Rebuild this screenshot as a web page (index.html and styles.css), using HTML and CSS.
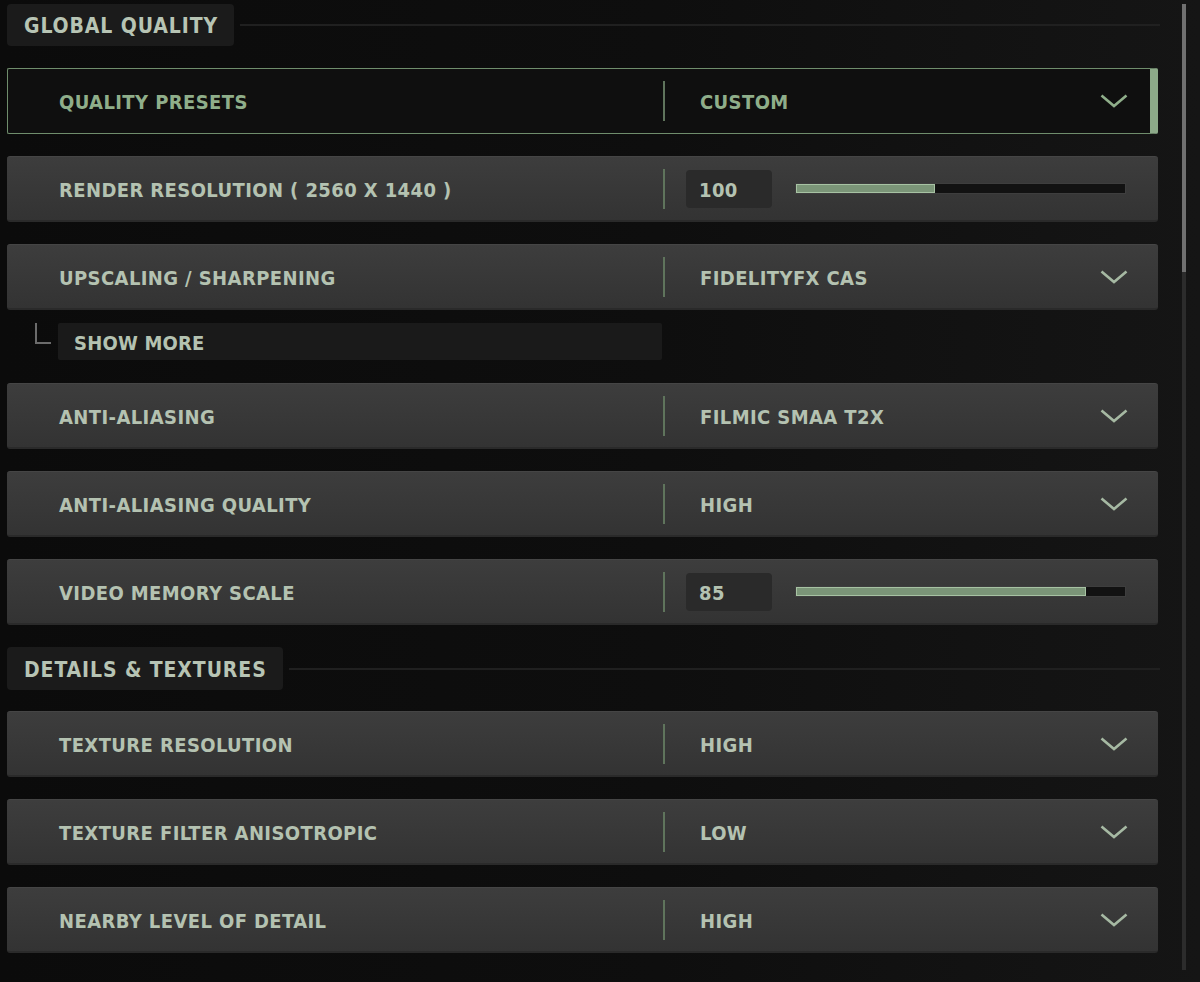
FILE: index.html
```html
<!DOCTYPE html>
<html>
<head>
<meta charset="utf-8">
<link rel="stylesheet" href="styles.css">
</head>
<body>
<div class="layout">
  <main class="content">
    <div class="section-head">
      <div class="head-box">GLOBAL QUALITY</div>
      <div class="head-line"></div>
    </div>

    <div class="row row-active">
      <div class="label">QUALITY PRESETS</div>
      <div class="sep"></div>
      <div class="value">CUSTOM</div>
      <svg class="chev" viewBox="0 0 28 14"><polyline points="1.5,1.5 14,12 26.5,1.5"/></svg>
    </div>

    <div class="row">
      <div class="label">RENDER RESOLUTION ( 2560 X 1440 )</div>
      <div class="sep"></div>
      <div class="num">100</div>
      <div class="track"><div class="fill" style="width:42.3%"></div></div>
    </div>

    <div class="row">
      <div class="label">UPSCALING / SHARPENING</div>
      <div class="sep"></div>
      <div class="value">FIDELITYFX CAS</div>
      <svg class="chev" viewBox="0 0 28 14"><polyline points="1.5,1.5 14,12 26.5,1.5"/></svg>
    </div>

    <div class="more">
      <div class="elbow"></div>
      <div class="more-box">SHOW MORE</div>
    </div>

    <div class="row">
      <div class="label">ANTI-ALIASING</div>
      <div class="sep"></div>
      <div class="value">FILMIC SMAA T2X</div>
      <svg class="chev" viewBox="0 0 28 14"><polyline points="1.5,1.5 14,12 26.5,1.5"/></svg>
    </div>

    <div class="row">
      <div class="label">ANTI-ALIASING QUALITY</div>
      <div class="sep"></div>
      <div class="value">HIGH</div>
      <svg class="chev" viewBox="0 0 28 14"><polyline points="1.5,1.5 14,12 26.5,1.5"/></svg>
    </div>

    <div class="row">
      <div class="label">VIDEO MEMORY SCALE</div>
      <div class="sep"></div>
      <div class="num">85</div>
      <div class="track"><div class="fill" style="width:88%"></div></div>
    </div>

    <div class="section-head head2">
      <div class="head-box">DETAILS &amp; TEXTURES</div>
      <div class="head-line"></div>
    </div>

    <div class="row">
      <div class="label">TEXTURE RESOLUTION</div>
      <div class="sep"></div>
      <div class="value">HIGH</div>
      <svg class="chev" viewBox="0 0 28 14"><polyline points="1.5,1.5 14,12 26.5,1.5"/></svg>
    </div>

    <div class="row">
      <div class="label">TEXTURE FILTER ANISOTROPIC</div>
      <div class="sep"></div>
      <div class="value">LOW</div>
      <svg class="chev" viewBox="0 0 28 14"><polyline points="1.5,1.5 14,12 26.5,1.5"/></svg>
    </div>

    <div class="row">
      <div class="label">NEARBY LEVEL OF DETAIL</div>
      <div class="sep"></div>
      <div class="value">HIGH</div>
      <svg class="chev" viewBox="0 0 28 14"><polyline points="1.5,1.5 14,12 26.5,1.5"/></svg>
    </div>
  </main>
  <div class="scroll">
    <div class="thumb"></div>
  </div>
</div>
</body>
</html>
```

FILE: styles.css
```css
html, body {
  margin: 0;
  padding: 0;
  height: 100%;
}
body {
  background: linear-gradient(90deg, #0b0b0b 0%, #0e0e0e 55%, #151515 100%);
  font-family: "DejaVu Sans Condensed", "DejaVu Sans", sans-serif;
  font-weight: 700;
  color: #b4c2b1;
  overflow: hidden;
}
.layout {
  display: flex;
  align-items: flex-start;
  height: 982px;
}
.content {
  width: 1151px;
  margin-left: 7px;
  padding-top: 4px;
}
.section-head {
  display: flex;
  align-items: center;
  height: 42px;
  margin-bottom: 22px;
}
.head2 {
  height: 43px;
  margin-bottom: 21px;
}
.head-box {
  height: 100%;
  display: flex;
  align-items: center;
  padding: 2px 16px 0 17px;
  box-sizing: border-box;
  background: #1b1b1b;
  border-radius: 4px;
  font-size: 21px;
  letter-spacing: 0.9px;
  color: #b7c4b4;
}
.head-line {
  flex: 1;
  height: 2px;
  margin-left: 6px;
  margin-right: -2px;
  background: #202020;
}
.row {
  height: 66px;
  box-sizing: border-box;
  display: flex;
  align-items: center;
  margin-bottom: 22px;
  border-radius: 3px;
  background: linear-gradient(180deg, #3d3d3d 0%, #373737 60%, #333333 100%);
  border-top: 1px solid #454545;
  border-bottom: 2px solid #2a2a2a;
  font-size: 20px;
  letter-spacing: 0.4px;
}
.row > .label, .row > .value, .num {
  padding-top: 2px;
}
.row-active {
  background: #0f0f0f;
  border: 1px solid #6f8d6c;
  border-right: 8px solid #8daa89;
  border-radius: 2px;
  color: #8fae8a;
}
.row-active .label { padding-left: 51px; width: 604px; }
.label {
  width: 604px;
  padding-left: 52px;
  white-space: nowrap;
}
.sep {
  width: 2px;
  height: 40px;
  background: #5f745c;
  flex: none;
}
.value {
  flex: 1;
  padding-left: 35px;
}
.row-active .value { color: #8fae8a; }
.chev {
  width: 28px;
  height: 14px;
  margin-right: 30px;
  flex: none;
}
.row-active .chev { margin-right: 22px; }
.chev polyline {
  fill: none;
  stroke: #a6b9a3;
  stroke-width: 2.6;
}
.row-active .chev polyline { stroke: #8fae8a; }
.num {
  width: 86px;
  height: 38px;
  box-sizing: border-box;
  margin-left: 21px;
  padding-left: 13px;
  display: flex;
  align-items: center;
  background: #2a2a2a;
  border-radius: 4px;
  flex: none;
}
.track {
  width: 331px;
  height: 11px;
  box-sizing: border-box;
  margin-left: 23px;
  background: #121212;
  border: 1px solid #3e3e3e;
  flex: none;
}
.fill {
  height: 100%;
  box-sizing: border-box;
  background: #7b9578;
  border: 1px solid #a7c2a3;
}
.more {
  display: flex;
  align-items: stretch;
  height: 37px;
  margin-top: -9px;
  margin-bottom: 23px;
}
.elbow {
  width: 16px;
  height: 21px;
  margin-left: 28px;
  margin-right: 7px;
  box-sizing: border-box;
  border-left: 2px solid #6b6b6b;
  border-bottom: 2px solid #6b6b6b;
}
.more-box {
  width: 604px;
  box-sizing: border-box;
  padding: 2px 0 0 16px;
  display: flex;
  align-items: center;
  background: #1a1a1a;
  border-radius: 2px;
  font-size: 20px;
  letter-spacing: 0.2px;
  color: #b4c2b1;
}
.scroll {
  width: 4px;
  height: 966px;
  margin-top: 4px;
  margin-left: 24px;
  background: #2c2c2c;
}
.thumb {
  height: 268px;
  background: #707070;
}
```
